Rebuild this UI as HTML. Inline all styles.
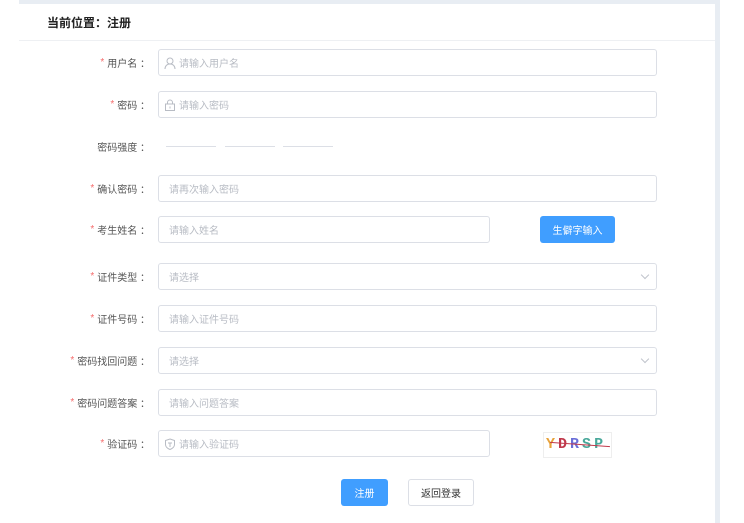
<!DOCTYPE html>
<html><head><meta charset="utf-8"><style>
*{box-sizing:border-box;margin:0;padding:0}
body{width:744px;height:523px;background:#fff;font-family:"Liberation Sans","Noto Sans CJK SC",sans-serif;position:relative;overflow:hidden;font-size:10px;color:#606266}
.a{position:absolute}
.top{left:19px;top:0;width:701px;height:4px;background:#e8edf3}
.rb{left:715px;top:0;width:5px;height:523px;background:#e8edf3}
.hl{left:19px;top:40px;width:696px;height:1px;background:#eef0f3}
.title{left:47px;top:14px;font-size:12px;font-weight:bold;color:#222}
.lbl{right:594px;justify-content:flex-end;font-size:10px;color:#555;white-space:nowrap;height:27px;display:flex;align-items:center}
.lbl b{color:#f56c6c;font-weight:normal;margin-right:3px}
.in{left:158px;width:499px;height:27px;border:1px solid #dcdfe6;border-radius:3px;display:flex;align-items:center;padding-left:10px;color:#b8bcc4;font-size:10px}
.in.ic{padding-left:20px}
.in svg{position:absolute;left:5px;top:7px}
.btn{height:27px;border-radius:3px;display:flex;align-items:center;justify-content:center;font-size:10px}
.bar{top:146px;width:50px;height:1px;background:#dcdfe6}
.chev{position:absolute;right:8px;top:8px;width:6px;height:6px;border-right:1px solid #c0c4cc;border-bottom:1px solid #c0c4cc;transform:rotate(45deg)}
</style></head><body>
<div class="a top"></div><div class="a rb"></div><div class="a hl"></div>
<div class="a title">当前位置：注册</div>

<div class="a lbl" style="top:49px"><b>*</b>用户名 ：</div>
<div class="a in ic" style="top:49px"><svg width="12" height="12" viewBox="0 0 12 12" fill="none" stroke="#b8bcc4"><circle cx="6" cy="4" r="3"/><path d="M1 12c0-3 2-5 5-5s5 2 5 5"/></svg>请输入用户名</div>

<div class="a lbl" style="top:91px"><b>*</b>密码 ：</div>
<div class="a in ic" style="top:91px"><svg width="12" height="12" viewBox="0 0 12 12" fill="none" stroke="#b8bcc4"><rect x="1.5" y="5" width="9" height="6.5"/><path d="M3.5 5V3.5a2.5 2.5 0 0 1 5 0V5M6 7.5v2"/></svg>请输入密码</div>

<div class="a lbl" style="top:133px">密码强度 ：</div>
<div class="a bar" style="left:166px"></div><div class="a bar" style="left:225px"></div><div class="a bar" style="left:283px"></div>

<div class="a lbl" style="top:175px"><b>*</b>确认密码 ：</div>
<div class="a in" style="top:175px">请再次输入密码</div>

<div class="a lbl" style="top:216px"><b>*</b>考生姓名 ：</div>
<div class="a in" style="top:216px;width:332px">请输入姓名</div>
<div class="a btn" style="left:540px;top:216px;width:75px;background:#409eff;color:#fff">生僻字输入</div>

<div class="a lbl" style="top:263px"><b>*</b>证件类型 ：</div>
<div class="a in" style="top:263px">请选择<span class="chev"></span></div>

<div class="a lbl" style="top:305px"><b>*</b>证件号码 ：</div>
<div class="a in" style="top:305px">请输入证件号码</div>

<div class="a lbl" style="top:347px"><b>*</b>密码找回问题 ：</div>
<div class="a in" style="top:347px">请选择<span class="chev"></span></div>

<div class="a lbl" style="top:389px"><b>*</b>密码问题答案 ：</div>
<div class="a in" style="top:389px">请输入问题答案</div>

<div class="a lbl" style="top:430px"><b>*</b>验证码 ：</div>
<div class="a in ic" style="top:430px;width:332px"><svg width="12" height="12" viewBox="0 0 12 12" fill="none" stroke="#b8bcc4"><path d="M6 1l4.5 1.5v4c0 2.5-2 4-4.5 5-2.5-1-4.5-2.5-4.5-5v-4z"/><path d="M4 5h4M6 5v4"/></svg>请输入验证码</div>
<div class="a" style="left:543px;top:432px;width:69px;height:26px;border:1px solid #eee;font-size:15px;font-weight:bold;letter-spacing:3px;padding-left:2px;line-height:24px;font-family:'Liberation Mono',monospace"><span style="color:#e8a23a">Y</span><span style="color:#c0394b">D</span><span style="color:#6a6fd8">R</span><span style="color:#49a89a">S</span><span style="color:#49a89a">P</span><div class="a" style="left:6px;top:11px;width:60px;height:1px;background:#c0394b;transform:rotate(4deg)"></div></div>

<div class="a btn" style="left:341px;top:479px;width:47px;background:#409eff;color:#fff">注册</div>
<div class="a btn" style="left:408px;top:479px;width:66px;border:1px solid #dcdfe6;color:#333">返回登录</div>
</body></html>
